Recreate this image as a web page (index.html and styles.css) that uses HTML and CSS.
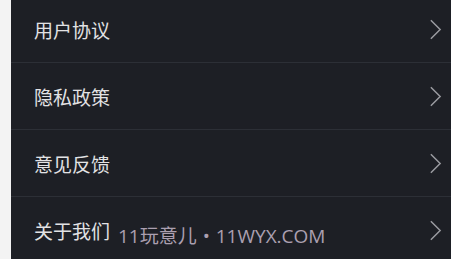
FILE: index.html
```html
<!DOCTYPE html>
<html lang="zh-CN">
<head>
  <meta charset="UTF-8" />
  <meta name="viewport" content="width=device-width, initial-scale=1.0"/>
  <title>设置</title>
  <link rel="stylesheet" href="styles.css">
</head>
<body>
  <div class="page">
    <div class="side-strip"></div>

    <!-- Settings menu -->
    <ul class="menu-list">
      <li class="menu-item">
        <span class="menu-text">用户协议</span>
        <svg class="chevron" viewBox="0 0 14 24"><path d="M2 2 L12 12 L2 22"/></svg>
      </li>
      <li class="menu-item">
        <span class="menu-text">隐私政策</span>
        <svg class="chevron" viewBox="0 0 14 24"><path d="M2 2 L12 12 L2 22"/></svg>
      </li>
      <li class="menu-item">
        <span class="menu-text">意见反馈</span>
        <svg class="chevron" viewBox="0 0 14 24"><path d="M2 2 L12 12 L2 22"/></svg>
      </li>
      <li class="menu-item">
        <span class="menu-text">关于我们</span>
        <svg class="chevron" viewBox="0 0 14 24"><path d="M2 2 L12 12 L2 22"/></svg>
      </li>
    </ul>

    <div class="watermark">11玩意儿 • 11WYX.COM</div>
  </div>
</body>
</html>
```

FILE: styles.css
```css
/* ==========================
   PAGE
=========================== */
body {
  margin: 0;
  padding: 0;
  background-color: #1d1f25;
  font-family: 'Noto Sans CJK SC', 'Noto Sans', sans-serif;
  overflow: hidden;
}

.page {
  display: flex;
  position: relative;
  height: 259px;
  overflow: hidden;
}

.side-strip {
  width: 11px;
  flex-shrink: 0;
  background-color: #f3f3f3;
}

/* ==========================
   MENU LIST
=========================== */
.menu-list {
  flex: 1;
  list-style: none;
  margin: -4px 0 0 0;
  padding: 0;
}

.menu-item {
  display: flex;
  align-items: center;
  justify-content: space-between;
  height: 66px;
  padding: 0 9px 0 23px;
  border-bottom: 1px solid #2c2f36;
}

.menu-text {
  font-size: 19px;
  color: #e2e2e4;
  line-height: 1;
}

.chevron {
  width: 13px;
  height: 23px;
  fill: none;
  stroke: #9a9ba0;
  stroke-width: 1.6;
}

/* ==========================
   WATERMARK
=========================== */
.watermark {
  position: absolute;
  left: 118px;
  top: 227px;
  font-family: 'Open Sans', 'Noto Sans CJK SC', sans-serif;
  font-size: 19px;
  word-spacing: 1px;
  color: #ab9fb0;
  line-height: 1;
}
```
